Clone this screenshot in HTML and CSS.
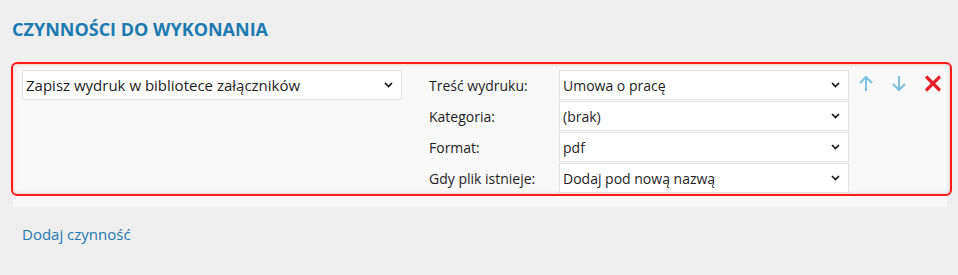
FILE: index.html
```html
<!DOCTYPE html>
<html lang="pl">
<head>
    <meta charset="UTF-8">
    <meta name="viewport" content="width=device-width, initial-scale=1.0">
    <title>Czynności do wykonania</title>
    <link rel="stylesheet" href="styles.css">
</head>
<body>
    <div class="page">
        <h2 class="title">CZYNNOŚCI DO WYKONANIA</h2>

        <div class="task">
            <div class="task-row">
                <div class="action-col">
                    <div class="select wide">
                        <span>Zapisz wydruk w bibliotece załączników</span>
                        <svg class="chevron" width="9" height="6" viewBox="0 0 9 6"><path d="M1 1 L4.5 4.5 L8 1" fill="none" stroke="#111" stroke-width="1.6"/></svg>
                    </div>
                </div>

                <div class="params">
                    <div class="param">
                        <span class="label">Treść wydruku:</span>
                        <div class="select">
                            <span>Umowa o pracę</span>
                            <svg class="chevron" width="9" height="6" viewBox="0 0 9 6"><path d="M1 1 L4.5 4.5 L8 1" fill="none" stroke="#111" stroke-width="1.6"/></svg>
                        </div>
                    </div>
                    <div class="param">
                        <span class="label">Kategoria:</span>
                        <div class="select">
                            <span>(brak)</span>
                            <svg class="chevron" width="9" height="6" viewBox="0 0 9 6"><path d="M1 1 L4.5 4.5 L8 1" fill="none" stroke="#111" stroke-width="1.6"/></svg>
                        </div>
                    </div>
                    <div class="param">
                        <span class="label">Format:</span>
                        <div class="select">
                            <span>pdf</span>
                            <svg class="chevron" width="9" height="6" viewBox="0 0 9 6"><path d="M1 1 L4.5 4.5 L8 1" fill="none" stroke="#111" stroke-width="1.6"/></svg>
                        </div>
                    </div>
                    <div class="param">
                        <span class="label">Gdy plik istnieje:</span>
                        <div class="select">
                            <span>Dodaj pod nową nazwą</span>
                            <svg class="chevron" width="9" height="6" viewBox="0 0 9 6"><path d="M1 1 L4.5 4.5 L8 1" fill="none" stroke="#111" stroke-width="1.6"/></svg>
                        </div>
                    </div>
                </div>

                <div class="tools">
                    <span class="tool up" title="W górę">
                        <svg width="16" height="17" viewBox="0 0 16 17"><path d="M8 16 V2 M2 8 L8 2 L14 8" fill="none" stroke="#7dbfdc" stroke-width="2"/></svg>
                    </span>
                    <span class="tool down" title="W dół">
                        <svg width="16" height="17" viewBox="0 0 16 17"><path d="M8 1 V15 M2 9 L8 15 L14 9" fill="none" stroke="#7dbfdc" stroke-width="2"/></svg>
                    </span>
                    <span class="tool remove" title="Usuń">
                        <svg width="18" height="17" viewBox="0 0 18 17"><path d="M2 1.5 L16 15.5 M16 1.5 L2 15.5" fill="none" stroke="#e6212b" stroke-width="3.2"/></svg>
                    </span>
                </div>
            </div>
        </div>

        <a class="add-link" href="#">Dodaj czynność</a>
    </div>
</body>
</html>
```

FILE: styles.css
```css
* {
    font-family: 'Open Sans', 'Noto Sans', sans-serif;
    box-sizing: border-box;
}
body {
    margin: 0;
    background-color: #eeeeee;
    color: #1e1e1e;
}
.page {
    padding: 0 6px 0 13px;
}
.title {
    margin: 0 0 0 -1px;
    padding: 17px 0 0 0;
    height: 62px;
    font-size: 18px;
    font-weight: 700;
    color: #1d7ab1;
}

/* panel czynnosci */
.task {
    background-color: #f7f7f7;
    padding-bottom: 11px;
    width: 934px;
}
.task-row {
    display: flex;
    border: 2px solid #ff1a1a;
    border-radius: 6px;
    margin: 0 -5px 0 -2px;
    padding: 6px 0 1px 9px;
    background-color: #f8f8f8;
    box-shadow: inset 0 0 3px rgba(255, 80, 80, 0.35), inset 0 0 6px rgba(0, 0, 0, 0.05);
}
.action-col {
    width: 380px;
}
.select {
    display: flex;
    align-items: center;
    justify-content: space-between;
    height: 30px;
    background-color: #ffffff;
    border: 1px solid #e3e3e3;
    padding: 0 8px 0 3px;
    font-size: 14px;
}
.select.wide {
    font-size: 15px;
}
.select span {
    white-space: nowrap;
}
.chevron {
    flex: none;
}
.params {
    display: flex;
    flex-direction: column;
    gap: 1px;
    margin-left: 27px;
}
.param {
    display: flex;
    align-items: center;
}
.label {
    width: 130px;
    font-size: 14px;
}
.param .select {
    width: 290px;
}
.tools {
    display: flex;
    gap: 17px;
    padding: 5px 0 0 9px;
    align-items: flex-start;
}
.tool {
    display: block;
    cursor: pointer;
    line-height: 0;
}

.add-link {
    display: inline-block;
    margin: 17px 0 0 9px;
    font-size: 15px;
    color: #1d78b3;
    text-decoration: none;
}
```
